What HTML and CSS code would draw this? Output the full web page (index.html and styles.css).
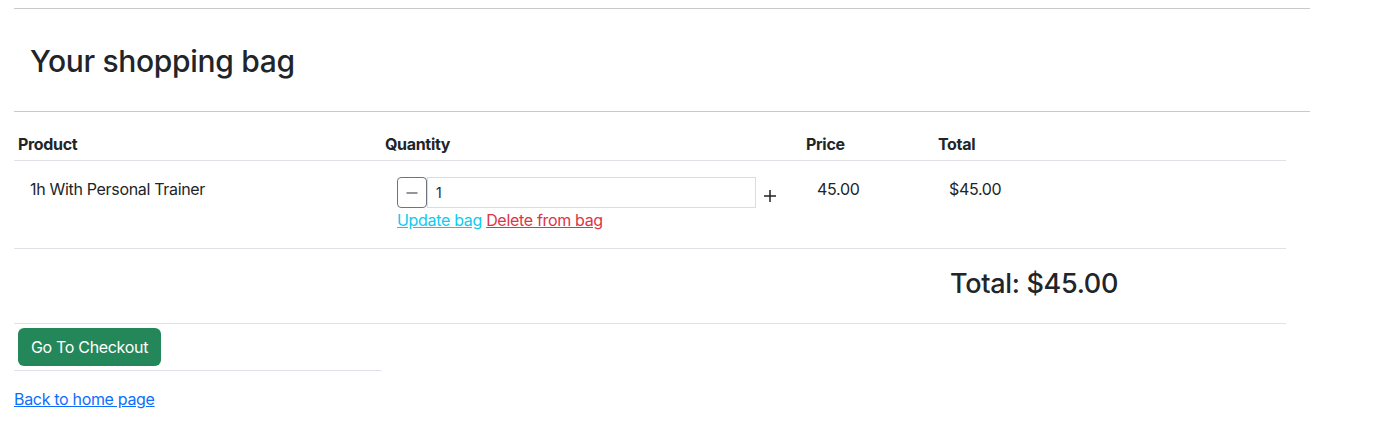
FILE: index.html
```html
<!DOCTYPE html>
<html lang="en">
<head>
<meta charset="utf-8">
<title>Your shopping bag</title>
<link rel="stylesheet" href="styles.css">
</head>
<body>
<div class="page">
  <hr class="rule">
  <div class="heading-wrap">
    <h2 class="title">Your shopping bag</h2>
  </div>
  <hr class="rule">
  <table class="bag">
    <colgroup>
      <col class="c1"><col class="c2"><col class="c3"><col class="c4">
    </colgroup>
    <thead>
      <tr>
        <th>Product</th>
        <th>Quantity</th>
        <th>Price</th>
        <th>Total</th>
      </tr>
    </thead>
    <tbody>
      <tr class="item">
        <td>1h With Personal Trainer</td>
        <td>
          <div class="qty">
            <button class="minus" type="button" aria-label="Decrease"><svg width="12" height="12" viewBox="0 0 12 12"><path d="M0.5 6H11.5" stroke="#6c757d" stroke-width="1.5"/></svg></button>
            <input class="qty-input" type="text" value="1">
            <button class="plus" type="button" aria-label="Increase"><svg width="12" height="12" viewBox="0 0 12 12"><path d="M0 6H12M6 0V12" stroke="#212529" stroke-width="1.5"/></svg></button>
          </div>
          <div class="actions"><a href="#" class="update">Update bag</a> <a href="#" class="delete">Delete from bag</a></div>
        </td>
        <td>45.00</td>
        <td>$45.00</td>
      </tr>
      <tr class="sum">
        <td></td>
        <td></td>
        <td></td>
        <td><h3 class="grand">Total: $45.00</h3></td>
      </tr>
      <tr class="checkout-row">
        <td><a href="#" class="checkout">Go To Checkout</a></td>
      </tr>
    </tbody>
  </table>
  <a href="#" class="home">Back to home page</a>
</div>
</body>
</html>
```
FILE: styles.css
```css
* { box-sizing: border-box; }
body {
  margin: 0;
  font-family: Inter, "Liberation Sans", sans-serif;
  font-size: 16px;
  line-height: 1.5;
  color: #212529;
  background: #fff;
  letter-spacing: -0.02em;
}
.page {
  width: 1296px;
  margin-left: 14px;
}
.rule {
  margin: 0;
  border: 0;
  border-top: 1px solid #c8c9ca;
}
.page > .rule:first-child { margin-top: 8px; }
.heading-wrap {
  padding: 34px 16px 32px;
}
.title {
  margin: 0;
  font-size: 30px;
  font-weight: 500;
  line-height: 1.2;
}
.bag {
  width: 1272px;
  border-collapse: collapse;
  table-layout: fixed;
}
.c1 { width: 367px; }
.c2 { width: 421px; }
.c3 { width: 132px; }
.c4 { width: 352px; }
.bag th {
  text-align: left;
  font-weight: 700;
  padding: 20px 4px 4px;
  border-bottom: 1px solid #dee2e6;
}
.bag td {
  vertical-align: top;
  padding: 16px 16px 16px;
  border-bottom: 1px solid #dee2e6;
}
.item td:nth-child(3), .item td:nth-child(4) { padding-left: 15px; }
.qty {
  display: flex;
  align-items: center;
  width: 384px;
}
.minus {
  display: flex;
  align-items: center;
  justify-content: center;
  width: 30px;
  height: 31px;
  border: 1px solid #6c757d;
  border-radius: 4px;
  background: #fff;
  padding: 0;
}
.qty-input {
  width: 329px;
  height: 31px;
  border: 1px solid #dcdcdc;
  padding: 4px 8px;
  font-family: inherit;
  font-size: 14px;
  color: #212529;
}
.plus {
  display: flex;
  border: 0;
  background: none;
  padding: 0 0 0 8px;
  margin-top: 6px;
}
.actions { line-height: 24px; }
.update { color: #0dcaf0; }
.delete { color: #dc3545; }
.bag .sum td { padding: 19px 16px 15px; }
.grand {
  margin: 0 0 8px;
  font-size: 27px;
  font-weight: 500;
  line-height: 1.2;
}
.bag .checkout-row td {
  padding: 4px;
}
.checkout {
  display: inline-block;
  background: #24875a;
  color: #fff;
  text-decoration: none;
  padding: 7px 13px;
  border-radius: 6px;
  line-height: 24px;
}
.home {
  display: inline-block;
  margin-top: 16px;
  color: #0d6efd;
}
```
